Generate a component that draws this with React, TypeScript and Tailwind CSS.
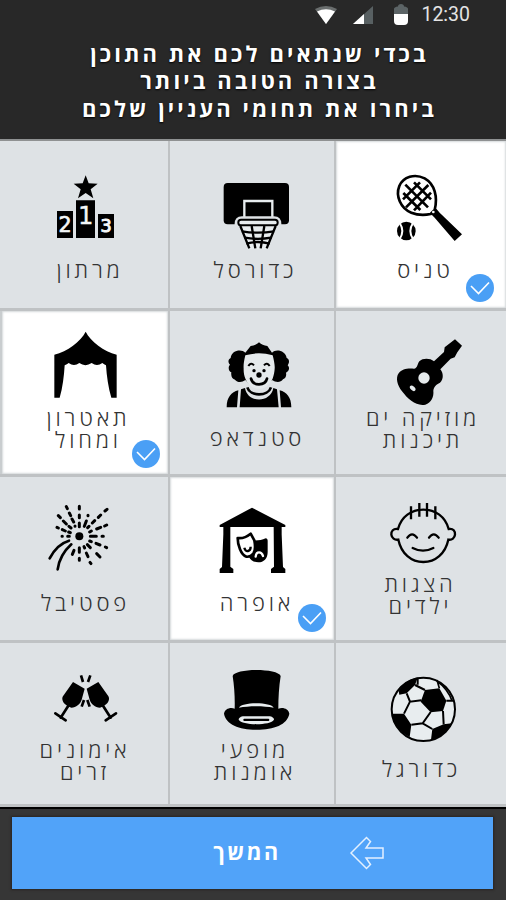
import { useState, type ReactNode } from 'react'
import clsx from 'clsx'

interface Interest {
  id: string
  lines: string[]
  icon: ReactNode
  labelClass: string
  badgeClass?: string
}

const MarathonIcon = (
  <>
    <path d="M257 106l9 24 27 1-21 17 8 27-23-16-23 16 8-27-21-17 27-1z" />
    <path d="M171 213h48v81h-48zM228 181h57v113h-57zM294 222h48v72h-48z" />
    <g fill="#f4f7f8" stroke="#f4f7f8" strokeWidth="2" fontFamily="DejaVu Sans" textAnchor="middle">
      <text x="195" y="277" fontSize="62">2</text>
      <text x="257" y="253" fontSize="73" strokeWidth="1">1</text>
      <text x="318" y="276" fontSize="53" strokeWidth="3">3</text>
    </g>
  </>
)

const BasketballIcon = (
  <>
    <rect x="167" y="129" width="196" height="124" rx="12" />
    <path d="M229 235v-52h84v52" fill="none" stroke="#e8edef" strokeWidth="7" />
    <path d="M200 256q-2-26 22-27h96q24 1 22 27z" fill="#dee2e5" />
    <path d="M212 255L240 328h60L328 255z" fill="#e8edef" />
    <rect x="211" y="239" width="118" height="17" rx="8" fill="#e8edef" stroke="#000" strokeWidth="6" />
    <path d="M217 258l27 67M323 258l-27 67M251 258l11 67M289 258l-11 67" fill="none" stroke="#000" strokeWidth="7" />
    <path d="M222 274q48 8 96 0M230 293q40 7 80 0M235 311q35-10 70 0" fill="none" stroke="#000" strokeWidth="7" />
  </>
)

const TennisIcon = (
  <>
    <path d="M302 210C312 170 302 132 272 115C242 100 208 110 196 138C184 168 200 205 232 218C252 226 275 225 290 222Z" fill="none" stroke="#000" strokeWidth="8" />
    <path d="M214 134l68 68M240 127l51 51M208 159l51 51M283 135l-67 67M258 127l-51 51M291 158l-51 53" fill="none" stroke="#000" strokeWidth="8" />
    <path d="M291 222l16-16 10 12 67 65-22 20-60-70z" />
    <circle cx="298" cy="216" r="4" fill="#fff" />
    <circle cx="217" cy="273" r="28" />
    <path d="M197 249q16 24 0 48M237 249q-16 24 0 48" fill="none" stroke="#fff" strokeWidth="6" />
  </>
)

const TentIcon = (
  <path d="M257 71C242 101 202 130 163 140V269h16C188 240 192 204 194 172q7-3 12-7q16 12 32 0q18 13 37 0q16 12 32 0q5 4 11 7C320 204 325 240 334 269h16V140C312 130 272 101 257 71z" />
)

const ClownIcon = (
  <>
    <path d="M232 134C220 122 190 127 188 150C178 155 181 166 186 170C179 177 182 190 190 193C188 206 194 213 201 215C208 224 222 224 232 216L248 232h50l14-16C324 224 338 224 345 214C353 210 356 203 354 194C364 190 366 178 359 172C366 162 363 152 356 150C353 128 324 121 312 134L298 114C288 113 280 110 273 103C266 110 257 113 248 114z" />
    <path d="M232 142q41-12 82 0C318 158 321 172 320 182C319 200 313 225 295 236q-22 13-44 0C233 225 226 200 227 182C226 172 228 158 232 142z" fill="#e5eaec" />
    <path d="M241 174q8-13 17-2M288 172q9-11 17 2" fill="none" stroke="#000" strokeWidth="6" />
    <circle cx="258" cy="188" r="5" />
    <circle cx="288" cy="188" r="5" />
    <circle cx="273" cy="201" r="8" />
    <path d="M249 212q4 17 24 17t24-17" fill="none" stroke="#000" strokeWidth="8" strokeLinecap="round" />
    <path d="M176 298C176 268 190 252 211 247L207 298zM370 298C370 268 356 252 335 247L339 298zM219 244l12-4C238 286 308 286 316 240l11 4l5 54H215z" />
    <path d="M238 238C246 266 300 266 309 238" fill="none" stroke="#000" strokeWidth="8" />
  </>
)

const GuitarIcon = (
  <>
    <path d="M363 94l21 19-14 20-8 15-12 4-31 32C328 194 330 214 318 224C306 230 300 236 298 248C300 266 292 284 274 290C248 296 222 274 204 250C190 232 184 210 194 196C204 182 222 180 240 182C250 182 250 168 256 160C266 150 288 150 300 160L330 132l2-14z" />
    <circle cx="270" cy="210" r="17" fill="#e5eaec" />
    <ellipse cx="236" cy="241" rx="10" ry="6" transform="rotate(42 236 241)" fill="#e5eaec" />
  </>
)

const FireworksIcon = (
  <>
    <circle cx="238" cy="187" r="12" />
    <g fill="none" stroke="#000" strokeWidth="9" strokeLinecap="round">
      <path d="M238 97v8M238 123v8M238 147v11M238 221v14M238 253v6M186 187h1M203 187h5M271 187h18M306 187h4" />
      <path d="M199 98l3 6M208 117l4 8M216 135l5 9M225 156v1M175 125l6 6M190 141l9 9M207 157l6 5M171 160l4 2M187 167l9 4M206 174l5 2" />
      <path d="M264 124l0 1M259 141l-6 16M321 106l-6 5M302 123l-7 7M284 140l-7 7M267 157l-4 4M320 153l-6 3M302 160l-12 5M274 171l-5 3" />
      <path d="M269 201l5 2M288 208l12 5M316 219l4 2M262 212l9 9M290 239l10 10M252 218l2 4M259 237l5 11M270 265l3 4M222 229l-5 12" />
      <path d="M207 200C183 207 162 228 149 253M214 211C192 231 177 258 173 286" strokeWidth="8" />
    </g>
  </>
)

const OperaIcon = (
  <>
    <path d="M252 101l100 52v6h-11v22l4 98 7 6v12h-43v-12l9-7-1-119H187v119l9 7v12h-41v-12l7-6 4-98v-22h-11v-6z" />
    <path d="M252 199c14 2 28 0 41-6c4 1 6 3 6 7v34c0 20-12 31-28 31c-14 0-24-7-28-17z" />
    <path d="M209 192c14 2 28-4 39-13l11 20c3 16 3 32-3 40c-6 7-14 10-21 9c-16-4-26-36-26-56z" fill="#fff" stroke="#000" strokeWidth="8" strokeLinejoin="round" />
    <path d="M229 221q3 12 11 10t8-13" fill="none" stroke="#000" strokeWidth="7" />
    <path d="M263 248c2-18 18-16 22-2" fill="none" stroke="#fff" strokeWidth="7" strokeLinecap="round" />
  </>
)

const KidIcon = (
  <g fill="none" stroke="#000" strokeWidth="7" strokeLinecap="round">
    <path d="M192 165C202 127 232 107 268 107C304 107 334 127 344 165C358 162 364 173 363 182C362 192 354 199 343 197C334 239 304 264 268 264C232 264 202 239 193 197C182 199 173 192 172 182C171 172 178 162 192 165z" />
    <path d="M231 97v39M256 87v41M279 87v41M304 97v39" strokeLinecap="butt" strokeWidth="7" />
    <path d="M220 191q14-20 29 0M285 191q14-20 29 0M236 222q31 16 62 0" />
  </g>
)

const Glass = (
  <>
    <path d="M219 126l35 20-9 33c-5 14-16 22-31 24c-14-4-26-14-27-25c-1-6 2-10 5-14z" />
    <path d="M206 196L182 233M166 220l31 21" stroke="#000" strokeWidth="8" strokeLinecap="round" />
  </>
)

const CheersIcon = (
  <>
    {Glass}
    <g transform="matrix(-1 0 0 1 514 0)">{Glass}</g>
    <path d="M243 106l6 20M271 106l-7 20M252 180l-7 20M262 180l7 20" stroke="#000" strokeWidth="8" />
  </>
)

const HatIcon = (
  <>
    <path d="M194 108C200 84 330 84 338 108C333 140 331 174 331 206C344 200 362 206 364 221C358 254 318 269 266 269C214 269 174 254 168 221C170 206 188 200 200 206C201 174 199 140 194 108z" />
    <path d="M213 203c6-18 98-18 104 0c-30-6-74-6-104 0z" fill="#e8edef" />
    <path d="M224 229h82c8 2 12 6 12 10c-10 18-96 18-106 0c0-4 4-8 12-10z" fill="#e8edef" />
    <rect x="226" y="236" width="78" height="7" rx="3" />
  </>
)

const SoccerIcon = (
  <>
    <circle cx="268" cy="208" r="95" fill="#e8edef" stroke="#000" strokeWidth="6" />
    <path d="M273 150l43-5 21 37-10 31-37 4-30-32z" />
    <path d="M194 153c12-22 32-36 57-40l-8 22-25 25-22 4zM174 221h36l22 33-5 37c-28-14-48-38-53-70zM291 299l4-32 34-14 25-3c-12 25-34 43-63 49z" />
    <path
      d="M243 135l30 15M218 160l10 25 34-4M228 185l-18 36M232 254l34-4 24-34M266 250l29 17M327 213l2 40M337 182l24 0M251 114v20"
      fill="none"
      stroke="#000"
      strokeWidth="6"
    />
    <path d="M316 145l-7-25M312 126c16 10 34 34 42 56" fill="none" stroke="#000" strokeWidth="5" />
  </>
)

const interests: Interest[] = [
  { id: 'marathon', lines: ['מרתון'], icon: MarathonIcon, labelClass: 'pl-[12px] pt-[24px]' },
  { id: 'basketball', lines: ['כדורסל'], icon: BasketballIcon, labelClass: 'pl-[7px] pt-[24px]' },
  { id: 'tennis', lines: ['טניס'], icon: TennisIcon, labelClass: 'pl-[15px] pt-[24px]', badgeClass: 'left-[130px] top-[133px]' },
  { id: 'theatre', lines: ['תאטרון', 'ומחול'], icon: TentIcon, labelClass: 'pl-[9px] pt-[4px]', badgeClass: 'left-[130px] top-[129px]' },
  { id: 'standup', lines: ['סטנדאפ'], icon: ClownIcon, labelClass: 'pl-[11px] pt-[24px]' },
  { id: 'music', lines: ['מוזיקה ים', 'תיכנות'], icon: GuitarIcon, labelClass: 'pl-[10px] pt-[4px]' },
  { id: 'festival', lines: ['פסטיבל'], icon: FireworksIcon, labelClass: 'pl-[3px] pt-[23px]' },
  { id: 'opera', lines: ['אופרה'], icon: OperaIcon, labelClass: 'pl-[10px] pt-[23px]', badgeClass: 'left-[128px] top-[127px]' },
  { id: 'kids', lines: ['הצגות', 'ילדים'], icon: KidIcon, labelClass: 'pl-[5px] pt-[4px]' },
  { id: 'cheers', lines: ['אימונים', 'זרים'], icon: CheersIcon, labelClass: 'pl-[2px] pt-[4px]' },
  { id: 'arts', lines: ['מופעי', 'אומנות'], icon: HatIcon, labelClass: 'pl-[6px] pt-[4px]' },
  { id: 'football', lines: ['כדורגל'], icon: SoccerIcon, labelClass: 'pl-[7px] pt-[23px]' },
]

export default function App() {
  const [selected, setSelected] = useState(['tennis', 'theatre', 'opera'])

  const toggle = (id: string) => {
    setSelected(prev => (prev.includes(id) ? prev.filter(s => s !== id) : [...prev, id]))
  }

  return (
    <div className="flex h-[900px] w-[506px] flex-col overflow-hidden bg-[#282828] font-['Open_Sans',sans-serif]">
      <StatusBar />

      <header
        dir="rtl"
        className="h-[109px] shrink-0 pt-[9.5px] pl-[13px] text-center text-[22px] leading-[27.5px] font-bold tracking-[3.1px] text-white [text-shadow:0_1px_2px_#000]"
      >
        <p>בכדי שנתאים לכם את התוכן</p>
        <p>בצורה הטובה ביותר</p>
        <p>ביחרו את תחומי העניין שלכם</p>
      </header>

      <main className="grid h-[668px] shrink-0 grid-cols-[168px_164px_170px] grid-rows-[167px_163px_163px_161px] gap-x-[2px] gap-y-[3px] border-t-2 border-t-[#8f9192] bg-[#bfc2c4]">
        {interests.map((item, i) => (
          <Tile
            key={item.id}
            item={item}
            active={selected.includes(item.id)}
            firstRow={i < 3}
            firstCol={i % 3 === 0}
            onClick={() => toggle(item.id)}
          />
        ))}
      </main>

      <footer className="flex-1 border-t-2 border-t-black bg-[#363636] px-[12px] pt-[8px]">
        <button className="flex h-[72px] w-[481px] items-center bg-[#51a3f9] pl-[200px] shadow-[0_0_2px_1px_#2a2522]">
          <span dir="rtl" className="w-[70px] pb-[3px] text-[21.5px] leading-[30px] font-bold tracking-[2.6px] whitespace-nowrap text-white">
            המשך
          </span>
          <svg className="ml-[67px] h-[34px] w-[36px]" viewBox="0 0 36 34" fill="none" stroke="#e3f0ff" strokeWidth="1.5">
            <path d="M2 17L17.500 1.500l4 4-4.500 6.500H34v10H17l4.500 6.500-4 4z" />
          </svg>
        </button>
      </footer>
    </div>
  )
}

function StatusBar() {
  return (
    <div className="flex h-[30px] shrink-0 items-center justify-end pr-[36px]">
      <svg className="h-[20px] w-[24px]" viewBox="0 0 24 20">
        <path d="M1 4Q12-2 23 4L12 19z" fill="#6a6e6e" />
        <path d="M3 6.500Q12 2 21 6.500L12 19z" fill="#fff" />
      </svg>
      <svg className="ml-[15px] h-[20px] w-[20px]" viewBox="0 0 20 20">
        <path d="M0 19L20 1v18z" fill="#586062" />
        <path d="M0 19L11 9v10z" fill="#fff" />
      </svg>
      <svg className="ml-[21px] h-[22px] w-[14px]" viewBox="0 0 14 22">
        <path d="M0 11V5q0-2 4-2.500Q4 0 7 0t3 2.500q4 .5 4 2.500v6z" fill="#5c6466" />
        <path d="M0 10h14v7q0 4-4 4H4q-4 0-4-4z" fill="#fff" />
      </svg>
      <span className="ml-[13px] font-[Roboto,sans-serif] text-[19.5px] text-[#e4e4e4]">12:30</span>
    </div>
  )
}

function Tile({ item, active, firstRow, firstCol, onClick }: {
  item: Interest
  active: boolean
  firstRow: boolean
  firstCol: boolean
  onClick: () => void
}) {
  return (
    <button
      onClick={onClick}
      className={clsx(
        'relative flex flex-col items-start',
        active ? 'bg-white shadow-[inset_0_0_2px_1px_#d5d9db]' : 'bg-[#dee2e5]',
        firstRow && 'pt-[2px]',
        firstCol && 'border-l-2',
        firstCol && (active ? 'border-l-[#c9cdcf]' : 'border-l-[#dee2e5]'),
      )}
    >
      <svg className="h-[92px] w-[164px] overflow-visible" viewBox="6 9 492 276">
        {item.icon}
      </svg>
      <span
        dir="rtl"
        className={clsx(
          'block w-[164px] text-center text-[22px] leading-[21.5px] font-light tracking-[3.85px] whitespace-nowrap text-[#333]',
          item.labelClass,
        )}
      >
        {item.lines.map(line => (
          <span key={line} className="block">{line}</span>
        ))}
      </span>
      {active && (
        <span className={clsx('absolute flex h-[28px] w-[28px] items-center justify-center rounded-full bg-[#4a9ff5]', item.badgeClass)}>
          <svg className="h-[14px] w-[20px]" viewBox="0 0 20 14" fill="none" stroke="#fff" strokeWidth="1.6">
            <path d="M1 5l7.500 7.500L19 1.500" />
          </svg>
        </span>
      )}
    </button>
  )
}
